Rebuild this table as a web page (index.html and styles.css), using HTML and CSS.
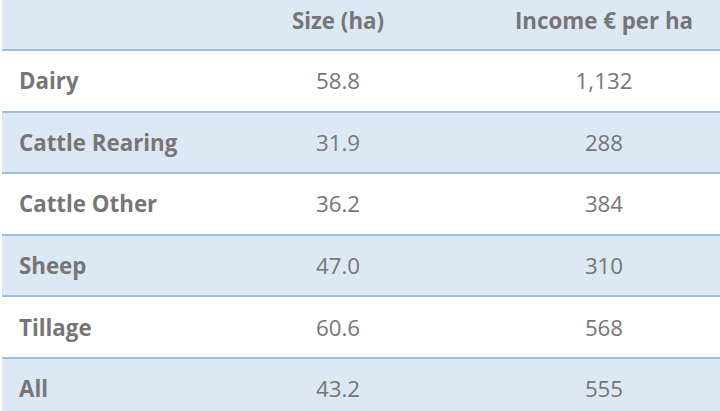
FILE: index.html
```html
<!DOCTYPE html>
<html lang="en">
<head>
<meta charset="utf-8">
<title>Farm income by type</title>
<link rel="stylesheet" href="styles.css">
</head>
<body>
<div class="table">
  <div class="row head">
    <div class="cell label"></div>
    <div class="cell num">Size (ha)</div>
    <div class="cell num">Income € per ha</div>
  </div>
  <div class="row white">
    <div class="cell label">Dairy</div>
    <div class="cell num">58.8</div>
    <div class="cell num">1,132</div>
  </div>
  <div class="row blue">
    <div class="cell label">Cattle Rearing</div>
    <div class="cell num">31.9</div>
    <div class="cell num">288</div>
  </div>
  <div class="row white">
    <div class="cell label">Cattle Other</div>
    <div class="cell num">36.2</div>
    <div class="cell num">384</div>
  </div>
  <div class="row blue">
    <div class="cell label">Sheep</div>
    <div class="cell num">47.0</div>
    <div class="cell num">310</div>
  </div>
  <div class="row white">
    <div class="cell label">Tillage</div>
    <div class="cell num">60.6</div>
    <div class="cell num">568</div>
  </div>
  <div class="row blue last">
    <div class="cell label">All</div>
    <div class="cell num">43.2</div>
    <div class="cell num">555</div>
  </div>
</div>
</body>
</html>
```
FILE: styles.css
```css
html, body {
  margin: 0;
  padding: 0;
  background: #ffffff;
  overflow: hidden;
}
body {
  padding-left: 2px;
  font-family: "Open Sans", "Liberation Sans", sans-serif;
  color: #777575;
  font-size: 22.3px;
}
.table {
  display: flex;
  flex-direction: column;
}
.row {
  display: grid;
  grid-template-columns: 186px 300px 232px;
  align-items: center;
  border-bottom: 2px solid #9dc0e2;
  height: 59.6px;
}
.row.head {
  height: 51px;
  box-sizing: border-box;
  padding-bottom: 9px;
  background: #dde8f5;
}
.row.last {
  border-bottom: none;
  height: 60px;
}
.row.blue { background: #dde8f5; }
.row.white { background: #ffffff; }
.cell.label {
  padding-left: 17px;
  font-weight: 700;
}
.head .cell { font-weight: 700; }
.cell.num { text-align: center; }
```
